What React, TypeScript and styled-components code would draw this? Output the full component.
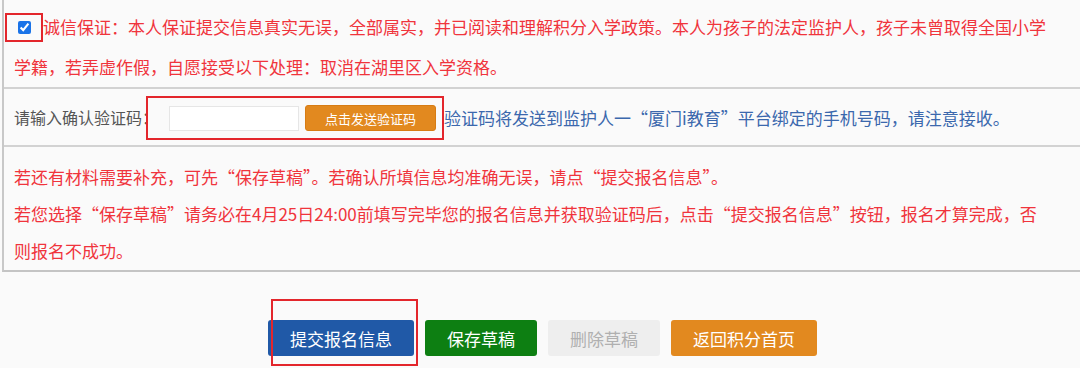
import React, { useState } from 'react'
import styled, { createGlobalStyle } from 'styled-components'

const GlobalStyle = createGlobalStyle`
  html, body {
    margin: 0;
    padding: 0;
    background: #fafafa;
  }
  body {
    font-family: "Noto Sans CJK SC", "Microsoft YaHei", sans-serif;
  }
`

type Tone = 'primary' | 'success' | 'disabled' | 'warning'

const buttonColors: Record<Tone, { bg: string; fg: string }> = {
  primary: { bg: '#2059a7', fg: '#ffffff' },
  success: { bg: '#0d7f12', fg: '#ffffff' },
  disabled: { bg: '#eeeeee', fg: '#b0b0b0' },
  warning: { bg: '#e2891f', fg: '#ffffff' },
}

function App() {
  const [agreed, setAgreed] = useState(true)
  const [code, setCode] = useState('')

  return (
    <Page lang="zh-CN">
      <GlobalStyle />
      <Panel>
        <PledgeRow>
          <CheckMark>
            <input type="checkbox" checked={agreed} onChange={(e) => setAgreed(e.target.checked)} />
          </CheckMark>
          诚信保证：本人保证提交信息真实无误，全部属实，并已阅读和理解积分入学政策。本人为孩子的法定监护人，孩子未曾取得全国小学学籍，若弄虚作假，自愿接受以下处理：取消在湖里区入学资格。
        </PledgeRow>
        <CodeRow>
          <Label>请输入确认验证码：</Label>
          <CodeMark>
            <CodeInput value={code} onChange={(e) => setCode(e.target.value)} />
            <SendButton>点击发送验证码</SendButton>
          </CodeMark>
          <Hint>验证码将发送到监护人一“厦门i教育”平台绑定的手机号码，请注意接收。</Hint>
        </CodeRow>
        <NoticeRow>
          <p>若还有材料需要补充，可先“保存草稿”。若确认所填信息均准确无误，请点“提交报名信息”。</p>
          <p>若您选择“保存草稿”请务必在4月25日24:00前填写完毕您的报名信息并获取验证码后，点击“提交报名信息”按钮，报名才算完成，否则报名不成功。</p>
        </NoticeRow>
      </Panel>
      <Actions>
        <ActionButton tone="primary">
          提交报名信息
          <ButtonMark />
        </ActionButton>
        <ActionButton tone="success">保存草稿</ActionButton>
        <ActionButton tone="disabled" disabled>删除草稿</ActionButton>
        <ActionButton tone="warning">返回积分首页</ActionButton>
      </Actions>
    </Page>
  )
}

const Page = styled.div`
  width: 1080px;
  height: 368px;
  overflow: hidden;
  background: #fafafa;
`

const Panel = styled.div`
  margin-left: 2px;
  border-left: 2px solid #c8c8c8;
  border-bottom: 2px solid #c4c4c4;
`

const PledgeRow = styled.div`
  padding: 7px 22px 0 10px;
  font-size: 17px;
  line-height: 40px;
  color: #f0343c;
  border-bottom: 2px solid #d2d2d2;
  height: 80px;
  box-sizing: content-box;
`

const CheckMark = styled.span`
  display: inline-flex;
  align-items: center;
  justify-content: center;
  vertical-align: middle;
  width: 34px;
  height: 25px;
  margin: -4px 0 0 -9px;
  border: 2px solid #e3262c;

  input {
    margin: 0;
    width: 13px;
    height: 13px;
    accent-color: #1a73e8;
  }
`

const CodeRow = styled.div`
  display: flex;
  align-items: center;
  height: 56px;
  padding-left: 10px;
  font-size: 17px;
  border-bottom: 2px solid #d2d2d2;
`

const Label = styled.span`
  font-size: 16px;
  color: #555555;
  white-space: nowrap;
`

const CodeMark = styled.span`
  display: flex;
  align-items: center;
  gap: 6px;
  margin-left: -12px;
  padding: 7px 6px 7px 21px;
  border: 2px solid #e3262c;
  margin-top: 2px;
`

const CodeInput = styled.input`
  box-sizing: border-box;
  width: 130px;
  height: 25px;
  padding: 0 6px;
  border: 1px solid #e6e6e6;
  background: #ffffff;
  outline: none;
`

const SendButton = styled.button`
  width: 131px;
  height: 26px;
  border: 1px solid #d77c14;
  border-radius: 3px;
  background: #e2891f;
  color: #ffffff;
  font-family: inherit;
  font-size: 13px;
  cursor: pointer;
`

const Hint = styled.span`
  color: #3b68ad;
  white-space: nowrap;
`

const NoticeRow = styled.div`
  padding: 11px 36px 0 10px;
  height: 112px;
  font-size: 17px;
  line-height: 37px;
  color: #f0343c;

  p {
    margin: 0;
  }
`

const Actions = styled.div`
  display: flex;
  justify-content: center;
  gap: 11px;
  padding: 48px 0 0 5px;
`

const ActionButton = styled.button<{ tone: Tone }>`
  position: relative;
  height: 36px;
  padding: 0 22px;
  border: none;
  border-radius: 3px;
  background: ${(p) => buttonColors[p.tone].bg};
  color: ${(p) => buttonColors[p.tone].fg};
  font-family: inherit;
  font-size: 17px;
  cursor: ${(p) => (p.tone === 'disabled' ? 'default' : 'pointer')};
`

const ButtonMark = styled.span`
  position: absolute;
  left: 3px;
  right: -4px;
  top: -21px;
  bottom: -10px;
  border: 2px solid #e3262c;
  pointer-events: none;
`

export default App
